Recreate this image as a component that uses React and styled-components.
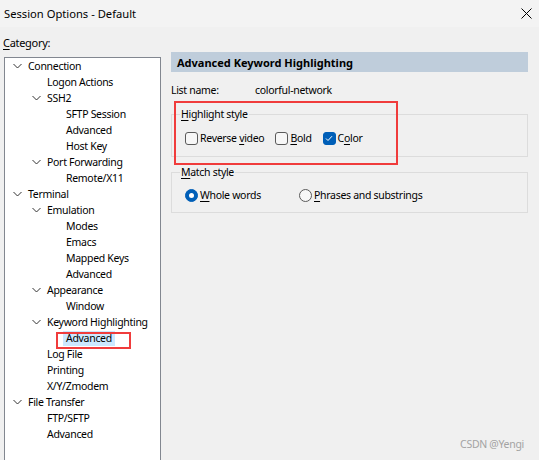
import styled, { createGlobalStyle } from "styled-components"

const GlobalStyle = createGlobalStyle`
    html, body {
        margin: 0;
        padding: 0;
        background: #f0f0f0;
    }
    body {
        font-family: "Noto Sans", "Liberation Sans", sans-serif;
        font-size: 10.5px;
        letter-spacing: -0.3px;
        color: #000;
    }
`

const Window = styled.div`
    width: 539px;
    height: 460px;
    overflow: hidden;
    position: relative;
    background: #f0f0f0;
`

const TitleBar = styled.div`
    height: 27px;
    background: #f3f3f3;
    display: flex;
    align-items: center;
    justify-content: space-between;
    padding: 0 7px 0 4px;
    font-size: 11.2px;
    letter-spacing: 0;
`

const Body = styled.div`
    display: flex;
    flex-direction: row;
    align-items: flex-start;
`

const LeftColumn = styled.div`
    display: flex;
    flex-direction: column;
    padding-left: 4px;
`

const Label = styled.div`
    line-height: 16px;
    margin: 8px 0 0 -1px;
    font-size: 11px;
`

const Tree = styled.div`
    width: 155px;
    height: 420px;
    margin-top: 6px;
    background: #fff;
    border: 1px solid #828790;
`

const Row = styled.div`
    height: 16px;
    display: flex;
    align-items: center;
    padding-left: ${(p) => 8 + p.$level * 19}px;
    white-space: nowrap;
`

const Twisty = styled.span`
    width: 15px;
    height: 16px;
    display: flex;
    align-items: center;
    flex-shrink: 0;
`

const ItemText = styled.span`
    position: relative;
    line-height: 15px;
    padding: 0 3px;
    margin-left: -3px;
    background: ${(p) => (p.$selected ? "#cce8ff" : "transparent")};
`

const RedMark = styled.div`
    position: absolute;
    border: 2px solid #f03c3c;
    pointer-events: none;
`

const RightColumn = styled.div`
    position: relative;
    width: 357px;
    margin: 25px 0 0 10px;
    display: flex;
    flex-direction: column;
`

const Header = styled.div`
    height: 20px;
    background: #bfcddb;
    display: flex;
    align-items: center;
    padding-left: 6px;
    font-weight: bold;
    font-size: 11px;
    letter-spacing: 0;
`

const InfoRow = styled.div`
    display: flex;
    line-height: 16px;
    margin-top: 10px;
`

const InfoKey = styled.span`
    width: 84px;
`

const Group = styled.fieldset`
    margin: ${(p) => p.$top}px 0 0 0;
    border: 1px solid #dcdcdc;
    padding: ${(p) => p.$pad}px 0 ${(p) => p.$bottom}px 13px;
    min-width: 0;
`

const Legend = styled.legend`
    padding: 0 1px;
    margin-left: -5px;
    line-height: 16px;
`

const Options = styled.div`
    display: flex;
    align-items: center;
    height: 16px;
`

const Option = styled.label`
    display: flex;
    align-items: center;
    gap: 2px;
    margin-right: ${(p) => (p.$min ? 0 : 11)}px;
    min-width: ${(p) => p.$min || 0}px;
`

const Box = styled.span`
    width: 11px;
    height: 11px;
    border: 1px solid ${(p) => (p.$checked ? "#005fb8" : "#5a5a5a")};
    border-radius: 3px;
    background: ${(p) => (p.$checked ? "#005fb8" : "#f7f7f7")};
    display: flex;
    align-items: center;
    justify-content: center;
`

const Radio = styled.span`
    width: 11px;
    height: 11px;
    border: 1px solid ${(p) => (p.$checked ? "#005fb8" : "#5a5a5a")};
    border-radius: 50%;
    background: ${(p) => (p.$checked ? "#005fb8" : "#f7f7f7")};
    display: flex;
    align-items: center;
    justify-content: center;
    &::after {
        content: "";
        width: 5px;
        height: 5px;
        border-radius: 50%;
        background: #fff;
        display: ${(p) => (p.$checked ? "block" : "none")};
    }
`

const Watermark = styled.div`
    position: absolute;
    right: 15px;
    bottom: 9px;
    font-size: 10.5px;
    color: #a3a3a3;
`

const U = styled.span`
    text-decoration: underline;
    text-underline-offset: 2px;
`

const Chevron = () => (
    <svg width="9" height="6" viewBox="0 0 9 6">
        <path d="M0.5 1 L4.5 5 L8.5 1" fill="none" stroke="#333" strokeWidth="1" />
    </svg>
)

const tree = [
    [0, "Connection", true],
    [1, "Logon Actions"],
    [1, "SSH2", true],
    [2, "SFTP Session"],
    [2, "Advanced"],
    [2, "Host Key"],
    [1, "Port Forwarding", true],
    [2, "Remote/X11"],
    [0, "Terminal", true],
    [1, "Emulation", true],
    [2, "Modes"],
    [2, "Emacs"],
    [2, "Mapped Keys"],
    [2, "Advanced"],
    [1, "Appearance", true],
    [2, "Window"],
    [1, "Keyword Highlighting", true],
    [2, "Advanced", false, true],
    [1, "Log File"],
    [1, "Printing"],
    [1, "X/Y/Zmodem"],
    [0, "File Transfer", true],
    [1, "FTP/SFTP"],
    [1, "Advanced"],
]

const App = () => {
    return (
        <Window>
            <GlobalStyle />
            <TitleBar>
                <span>Session Options - Default</span>
                <svg width="11" height="11" viewBox="0 0 11 11">
                    <path d="M0.5 0.5 L10.5 10.5 M10.5 0.5 L0.5 10.5" stroke="#000" strokeWidth="1" />
                </svg>
            </TitleBar>
            <Body>
                <LeftColumn>
                    <Label><U>C</U>ategory:</Label>
                    <Tree>
                        {tree.map(([level, text, open, selected], i) => (
                            <Row key={i} $level={level}>
                                <Twisty>{open && <Chevron />}</Twisty>
                                <ItemText $selected={selected}>
                                    {text}
                                    {selected && (
                                        <RedMark style={{ left: -7, top: 1, width: 71, height: 13 }} />
                                    )}
                                </ItemText>
                            </Row>
                        ))}
                    </Tree>
                </LeftColumn>
                <RightColumn>
                    <Header>Advanced Keyword Highlighting</Header>
                    <InfoRow>
                        <InfoKey>List name:</InfoKey>
                        <span>colorful-network</span>
                    </InfoRow>
                    <Group $top={8} $pad={8} $bottom={10}>
                        <Legend><U>H</U>ighlight style</Legend>
                        <Options>
                            <Option>
                                <Box />
                                <span>Reverse <U>v</U>ideo</span>
                            </Option>
                            <Option>
                                <Box />
                                <span><U>B</U>old</span>
                            </Option>
                            <Option>
                                <Box $checked>
                                    <svg width="8" height="7" viewBox="0 0 8 7">
                                        <path d="M1 3.5 L3 5.5 L7 1.2" fill="none" stroke="#fff" strokeWidth="1" />
                                    </svg>
                                </Box>
                                <span>C<U>o</U>lor</span>
                            </Option>
                        </Options>
                    </Group>
                    <Group $top={7} $pad={7} $bottom={9}>
                        <Legend><U>M</U>atch style</Legend>
                        <Options>
                            <Option $min={114}>
                                <Radio $checked />
                                <span><U>W</U>hole words</span>
                            </Option>
                            <Option>
                                <Radio />
                                <span><U>P</U>hrases and substrings</span>
                            </Option>
                        </Options>
                    </Group>
                    <RedMark style={{ left: 3, top: 49, width: 220, height: 60 }} />
                </RightColumn>
            </Body>
            <Watermark>CSDN @Yengi</Watermark>
        </Window>
    )
}

export default App
